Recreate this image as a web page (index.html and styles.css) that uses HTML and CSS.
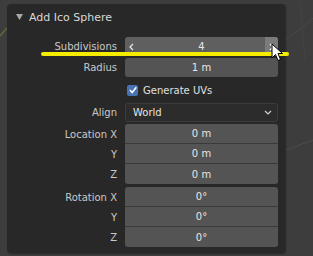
FILE: index.html
```html
<!DOCTYPE html>
<html lang="en">
<head>
    <meta charset="UTF-8">
    <title>Add Ico Sphere</title>
    <link rel="stylesheet" href="styles.css">
</head>
<body>
    <svg class="viewport-lines" width="313" height="256">
        <line x1="0" y1="36" x2="7" y2="28" stroke="#5b6b3c" stroke-width="1.5"/>
        <line x1="286" y1="40" x2="313" y2="18" stroke="#4a4a4a" stroke-width="1"/>
        <line x1="286" y1="150" x2="313" y2="140" stroke="#4c4c4c" stroke-width="1"/>
        <line x1="300" y1="0" x2="305" y2="60" stroke="#444" stroke-width="1"/>
    </svg>

    <div class="panel">
        <div class="panel-head">
            <svg class="caret" width="7" height="6"><polygon points="0,0 7,0 3.5,6" fill="#a8a8a8"/></svg>
            Add Ico Sphere
        </div>
        <div class="props">
            <div class="row">
                <span class="label">Subdivisions</span>
                <div class="field num hover">
                    <span class="step"><svg width="5" height="8"><polyline points="4,1 1,4 4,7" fill="none" stroke="#e6e6e6" stroke-width="1.3"/></svg></span>
                    <span class="val">4</span>
                    <span class="step active"><svg width="5" height="8"><polyline points="1,1 4,4 1,7" fill="none" stroke="#fff" stroke-width="1.3"/></svg></span>
                </div>
            </div>
            <div class="row">
                <span class="label">Radius</span>
                <div class="field">1 m</div>
            </div>
            <div class="row check-row">
                <span class="label"></span>
                <label class="check">
                    <span class="box"><svg width="10" height="10"><polyline points="2,5 4.2,7.5 8.3,2.3" fill="none" stroke="#fff" stroke-width="1.6"/></svg></span>
                    Generate UVs
                </label>
            </div>
            <div class="row">
                <span class="label">Align</span>
                <div class="field menu">
                    <span>World</span>
                    <svg width="8" height="5"><polyline points="1,1 4,4 7,1" fill="none" stroke="#d0d0d0" stroke-width="1.2"/></svg>
                </div>
            </div>
            <div class="group">
                <div class="row"><span class="label">Location X</span><div class="field">0 m</div></div>
                <div class="row"><span class="label">Y</span><div class="field">0 m</div></div>
                <div class="row"><span class="label">Z</span><div class="field">0 m</div></div>
            </div>
            <div class="group">
                <div class="row"><span class="label">Rotation X</span><div class="field">0°</div></div>
                <div class="row"><span class="label">Y</span><div class="field">0°</div></div>
                <div class="row"><span class="label">Z</span><div class="field">0°</div></div>
            </div>
        </div>
    </div>

    <div class="marker"></div>
    <svg class="cursor" width="13" height="19" viewBox="0 0 13 19">
        <polygon points="1,1 1,15 4.5,11.5 7,17.5 9.5,16.5 7,10.5 11.5,10.5" fill="#fff" stroke="#000" stroke-width="1"/>
    </svg>
</body>
</html>
```

FILE: styles.css
```css
body {
    margin: 0;
    background-color: #3d3d3d;
    font-family: 'DejaVu Sans', sans-serif;
    color: #d4d4d4;
    width: 313px;
    height: 256px;
    overflow: hidden;
    position: relative;
}
.viewport-lines {
    position: absolute;
    left: 0;
    top: 0;
}
.panel {
    position: relative;
    margin: 4px 0 0 7px;
    width: 278px;
    background: #282828;
    border-radius: 4px;
    padding-bottom: 6px;
    box-shadow: 1px 1px 2px rgba(0,0,0,0.35);
}
.panel-head {
    height: 26px;
    display: flex;
    align-items: center;
    padding-left: 9px;
    font-size: 11px;
    color: #d8d8d8;
}
.caret {
    margin-right: 6px;
}
.props {
    display: flex;
    flex-direction: column;
    gap: 2px;
    padding-top: 7px;
}
.row {
    display: grid;
    grid-template-columns: 110px 153px;
    column-gap: 8px;
    height: 19px;
    align-items: center;
    font-size: 10px;
}
.label {
    text-align: right;
    color: #c8c8c8;
}
.field {
    height: 100%;
    background: #545454;
    border-radius: 3px;
    color: #e6e6e6;
    display: flex;
    align-items: center;
    justify-content: center;
    box-sizing: border-box;
}
.num {
    justify-content: space-between;
    overflow: hidden;
}
.hover {
    background: #5f5f5f;
}
.step {
    width: 13px;
    height: 100%;
    display: flex;
    align-items: center;
    justify-content: center;
}
.step.active {
    background: #7b7b7b;
}
.check-row {
    height: 22px;
}
.check {
    display: flex;
    align-items: center;
    gap: 5px;
    color: #e0e0e0;
    padding-left: 2px;
}
.box {
    width: 11px;
    height: 11px;
    background: #4772b3;
    border-radius: 2px;
    display: flex;
    align-items: center;
    justify-content: center;
}
.menu {
    background: #2c2c2c;
    border: 1px solid #3c3c3c;
    justify-content: space-between;
    padding: 0 5px 0 7px;
}
.group {
    display: flex;
    flex-direction: column;
}
.group .row {
    height: 20px;
}
.group .field {
    border-radius: 0;
    border-bottom: 1px solid #3a3a3a;
}
.group .row:first-child .field {
    border-radius: 3px 3px 0 0;
}
.group .row:last-child .field {
    border-radius: 0 0 3px 3px;
    border-bottom: none;
}
.group + .group {
    margin-top: 1px;
}
.marker {
    position: absolute;
    left: 41px;
    top: 52px;
    width: 248px;
    height: 4px;
    background: #f5ec00;
    border-radius: 2px;
}
.cursor {
    position: absolute;
    left: 271px;
    top: 43px;
}
```
